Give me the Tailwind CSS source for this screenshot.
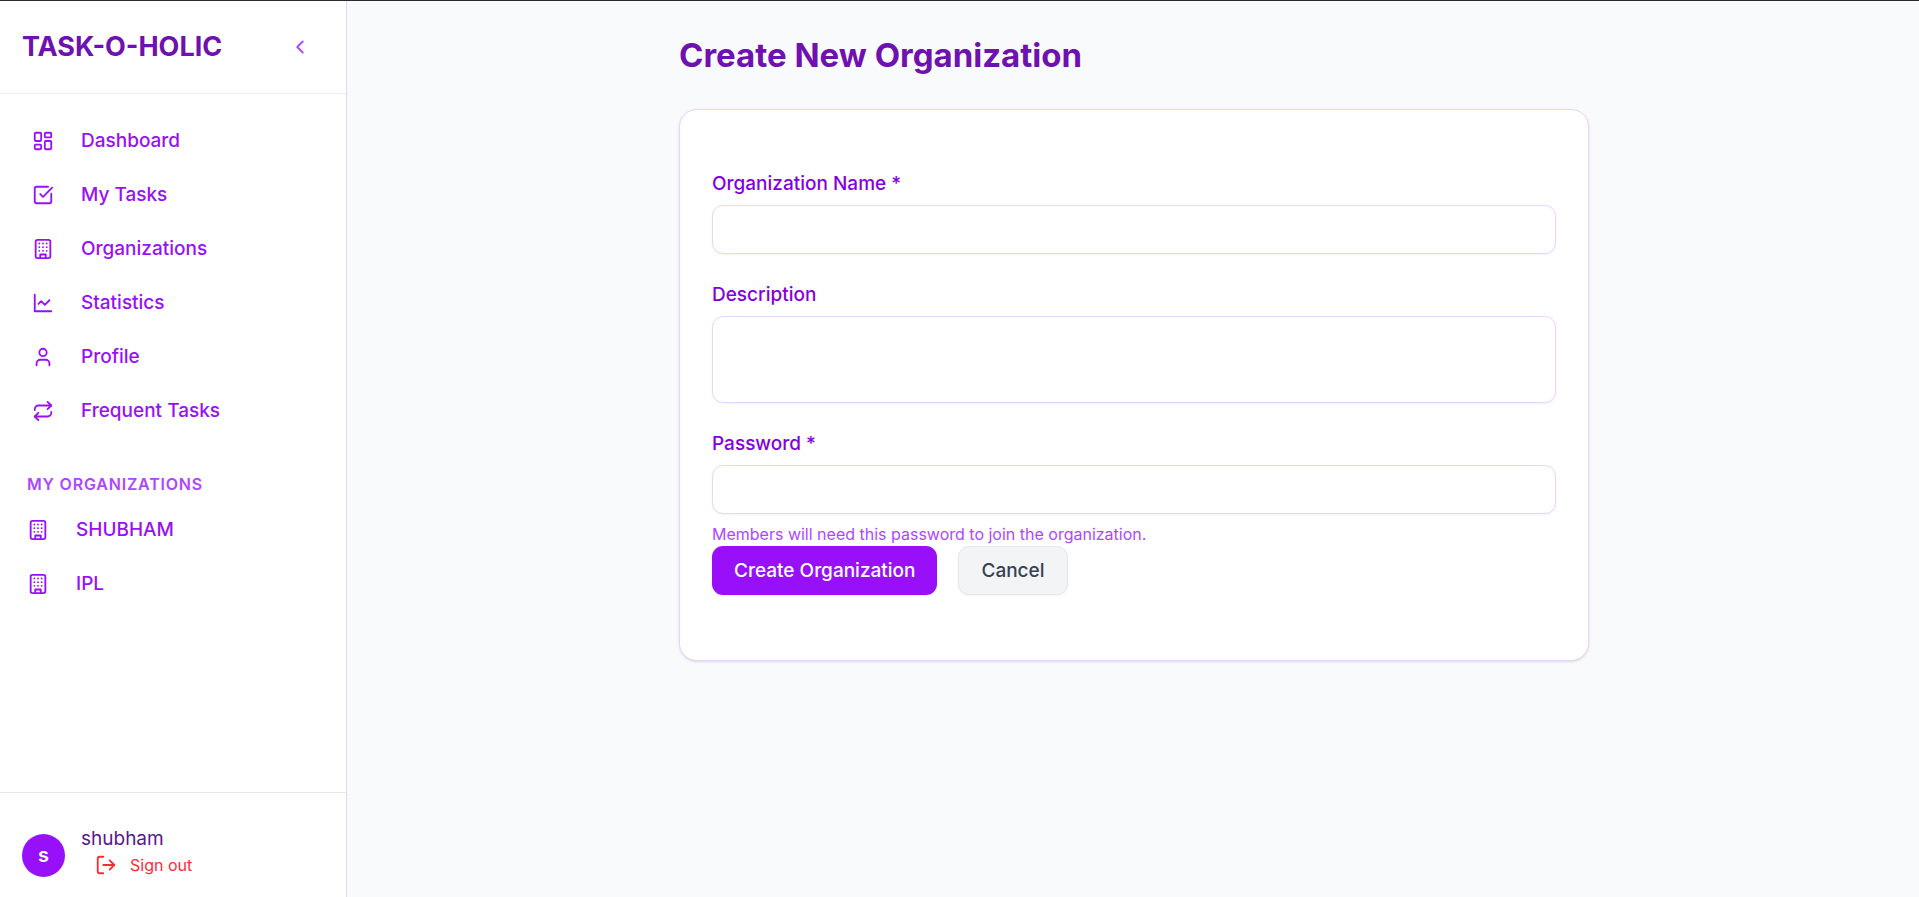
<!DOCTYPE html>
<html lang="en">
<head>
<meta charset="utf-8">
<meta name="viewport" content="width=device-width, initial-scale=1">
<title>Task-O-Holic</title>
<script src="https://cdn.jsdelivr.net/npm/@tailwindcss/browser@4"></script>
</head>
<body class="flex min-h-screen border-t border-[#2b2a33] bg-gray-50 font-['Inter',sans-serif] text-[19px] leading-[26px]">
<svg class="hidden" aria-hidden="true">
  <symbol id="building" viewBox="0 0 24 24"><rect x="4" y="2" width="16" height="20" rx="2"/><path d="M9 22v-4h6v4M8 6h.01M16 6h.01M12 6h.01M12 10h.01M12 14h.01M16 10h.01M16 14h.01M8 10h.01M8 14h.01"/></symbol>
</svg>

<aside class="flex w-[347px] shrink-0 flex-col border-r border-purple-200 bg-white">
  <div class="flex h-[93px] items-center justify-between border-b border-purple-100 pl-[22px] pr-[35px]">
    <a href="#" class="text-[27px] leading-[36px] font-bold text-purple-800">TASK-O-HOLIC</a>
    <button type="button" aria-label="Collapse sidebar" class="text-purple-500">
      <svg class="size-[22px]" viewBox="0 0 24 24" fill="none" stroke="currentColor" stroke-width="2" stroke-linecap="round" stroke-linejoin="round"><path d="m15 18-6-6 6-6"/></svg>
    </button>
  </div>

  <nav class="flex flex-1 flex-col pt-[22px] font-medium text-purple-600">
    <ul class="flex flex-col gap-1">
      <li><a href="#" class="flex h-[50px] items-center gap-[27px] pl-8">
        <svg class="size-[22px]" viewBox="0 0 24 24" fill="none" stroke="currentColor" stroke-width="2" stroke-linecap="round" stroke-linejoin="round"><rect x="3" y="3" width="7" height="9" rx="1"/><rect x="14" y="3" width="7" height="5" rx="1"/><rect x="14" y="12" width="7" height="9" rx="1"/><rect x="3" y="16" width="7" height="5" rx="1"/></svg>Dashboard</a></li>
      <li><a href="#" class="flex h-[50px] items-center gap-[27px] pl-8">
        <svg class="size-[22px]" viewBox="0 0 24 24" fill="none" stroke="currentColor" stroke-width="2" stroke-linecap="round" stroke-linejoin="round"><path d="M21 10.5V19a2 2 0 0 1-2 2H5a2 2 0 0 1-2-2V5a2 2 0 0 1 2-2h12.5"/><path d="m9 11 3 3L22 4"/></svg>My Tasks</a></li>
      <li><a href="#" class="flex h-[50px] items-center gap-[27px] pl-8">
        <svg class="size-[22px]" fill="none" stroke="currentColor" stroke-width="2" stroke-linecap="round" stroke-linejoin="round"><use href="#building"/></svg>Organizations</a></li>
      <li><a href="#" class="flex h-[50px] items-center gap-[27px] pl-8">
        <svg class="size-[22px]" viewBox="0 0 24 24" fill="none" stroke="currentColor" stroke-width="2" stroke-linecap="round" stroke-linejoin="round"><path d="M3 3v18h18"/><path d="m19 9-5 5-4-4-3 3"/></svg>Statistics</a></li>
      <li><a href="#" class="flex h-[50px] items-center gap-[27px] pl-8">
        <svg class="size-[22px]" viewBox="0 0 24 24" fill="none" stroke="currentColor" stroke-width="2" stroke-linecap="round" stroke-linejoin="round"><path d="M19 21v-2a4 4 0 0 0-4-4H9a4 4 0 0 0-4 4v2"/><circle cx="12" cy="7" r="4"/></svg>Profile</a></li>
      <li><a href="#" class="flex h-[50px] items-center gap-[27px] pl-8">
        <svg class="size-[22px]" viewBox="0 0 24 24" fill="none" stroke="currentColor" stroke-width="2" stroke-linecap="round" stroke-linejoin="round"><path d="m17 2 4 4-4 4"/><path d="M3 11v-1a4 4 0 0 1 4-4h14"/><path d="m7 22-4-4 4-4"/><path d="M21 13v1a4 4 0 0 1-4 4H3"/></svg>Frequent Tasks</a></li>
    </ul>
    <h2 class="mt-[37px] pl-[27px] text-[16px] leading-[22px] font-semibold tracking-wider text-purple-500 uppercase">My Organizations</h2>
    <ul class="mt-[10px] flex flex-col gap-1">
      <li><a href="#" class="flex h-[50px] items-center gap-[27px] pl-[27px]">
        <svg class="size-[22px]" fill="none" stroke="currentColor" stroke-width="2" stroke-linecap="round" stroke-linejoin="round"><use href="#building"/></svg>SHUBHAM</a></li>
      <li><a href="#" class="flex h-[50px] items-center gap-[27px] pl-[27px]">
        <svg class="size-[22px]" fill="none" stroke="currentColor" stroke-width="2" stroke-linecap="round" stroke-linejoin="round"><use href="#building"/></svg>IPL</a></li>
    </ul>
  </nav>

  <div class="flex items-center gap-[16px] border-t border-gray-200 pt-[33px] pr-4 pb-[19px] pl-[22px]">
    <div class="mt-[6px] flex size-[43px] items-center justify-center rounded-full bg-purple-600 text-[20px] font-semibold text-white">s</div>
    <div class="flex flex-col">
      <span class="text-purple-900">shubham</span>
      <button type="button" class="flex items-center gap-[13px] pl-[14px] text-[16px] text-red-500">
        <svg class="size-[22px]" viewBox="0 0 24 24" fill="none" stroke="currentColor" stroke-width="2" stroke-linecap="round" stroke-linejoin="round"><path d="M9 21H5a2 2 0 0 1-2-2V5a2 2 0 0 1 2-2h4"/><path d="m16 17 5-5-5-5"/><path d="M21 12H9"/></svg>Sign out</button>
    </div>
  </div>
</aside>

<main class="flex-1 pt-[34px] pr-8 pl-[34px]">
  <div class="mx-auto max-w-[910px]">
    <h1 class="text-[33px] leading-[40px] font-bold text-purple-800">Create New Organization</h1>
    <form class="mt-[34px] rounded-[18px] border border-purple-200 bg-white px-8 pt-[61px] pb-[65px] shadow-sm">
      <div class="flex flex-col gap-7">
        <div class="flex flex-col gap-2">
          <label for="name" class="font-medium text-purple-700">Organization Name *</label>
          <input id="name" type="text" required class="h-[49px] w-full rounded-[11px] border border-purple-200 bg-white px-4 shadow-xs">
        </div>
        <div class="flex flex-col gap-2">
          <label for="description" class="font-medium text-purple-700">Description</label>
          <textarea id="description" class="h-[87px] w-full resize-none rounded-[11px] border border-purple-200 bg-white px-4 py-2 shadow-xs"></textarea>
        </div>
        <div class="flex flex-col gap-2">
          <label for="password" class="font-medium text-purple-700">Password *</label>
          <input id="password" type="password" required aria-describedby="hint" class="h-[49px] w-full rounded-[11px] border border-purple-200 bg-white px-4 shadow-xs">
          <p id="hint" class="text-[16px] leading-[24px] text-purple-500">Members will need this password to join the organization.</p>
        </div>
      </div>
      <div class="flex gap-[21px]">
        <button type="submit" class="h-[49px] rounded-[11px] bg-purple-600 px-[22px] font-medium text-white shadow-xs">Create Organization</button>
        <button type="button" class="h-[49px] rounded-[11px] border border-gray-200 bg-gray-100 px-[22px] font-medium text-gray-700 shadow-xs">Cancel</button>
      </div>
    </form>
  </div>
</main>
</body>
</html>
